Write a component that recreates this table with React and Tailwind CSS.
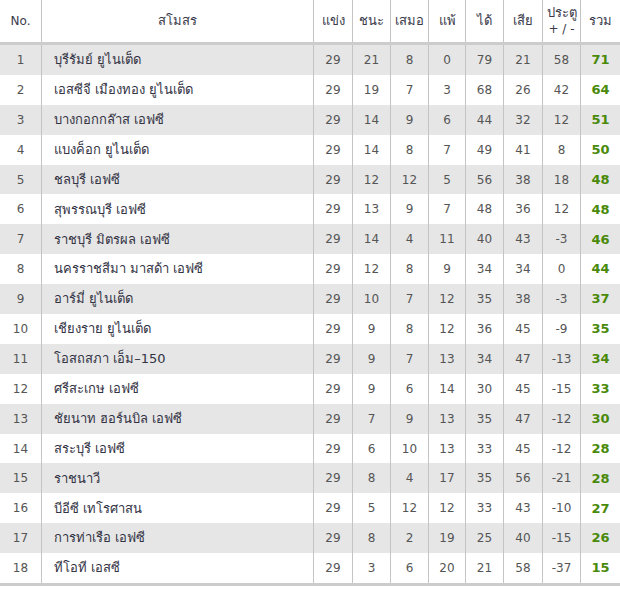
import React from "react";

const rows = [
  [1, "บุรีรัมย์ ยูไนเต็ด", 29, 21, 8, 0, 79, 21, 58, 71],
  [2, "เอสซีจี เมืองทอง ยูไนเต็ด", 29, 19, 7, 3, 68, 26, 42, 64],
  [3, "บางกอกกล๊าส เอฟซี", 29, 14, 9, 6, 44, 32, 12, 51],
  [4, "แบงค็อก ยูไนเต็ด", 29, 14, 8, 7, 49, 41, 8, 50],
  [5, "ชลบุรี เอฟซี", 29, 12, 12, 5, 56, 38, 18, 48],
  [6, "สุพรรณบุรี เอฟซี", 29, 13, 9, 7, 48, 36, 12, 48],
  [7, "ราชบุรี มิตรผล เอฟซี", 29, 14, 4, 11, 40, 43, -3, 46],
  [8, "นครราชสีมา มาสด้า เอฟซี", 29, 12, 8, 9, 34, 34, 0, 44],
  [9, "อาร์มี่ ยูไนเต็ด", 29, 10, 7, 12, 35, 38, -3, 37],
  [10, "เชียงราย ยูไนเต็ด", 29, 9, 8, 12, 36, 45, -9, 35],
  [11, "โอสถสภา เอ็ม–150", 29, 9, 7, 13, 34, 47, -13, 34],
  [12, "ศรีสะเกษ เอฟซี", 29, 9, 6, 14, 30, 45, -15, 33],
  [13, "ชัยนาท ฮอร์นบิล เอฟซี", 29, 7, 9, 13, 35, 47, -12, 30],
  [14, "สระบุรี เอฟซี", 29, 6, 10, 13, 33, 45, -12, 28],
  [15, "ราชนาวี", 29, 8, 4, 17, 35, 56, -21, 28],
  [16, "บีอีซี เทโรศาสน", 29, 5, 12, 12, 33, 43, -10, 27],
  [17, "การท่าเรือ เอฟซี", 29, 8, 2, 19, 25, 40, -15, 26],
  [18, "ทีโอที เอสซี", 29, 3, 6, 20, 21, 58, -37, 15],
];

const statW = ["w-[39px]", "w-[38px]", "w-[38px]", "w-[37px]", "w-[38px]", "w-[39px]", "w-[38px]"];
const heads = ["แข่ง", "ชนะ", "เสมอ", "แพ้", "ได้", "เสีย"];

export default function App() {
  return (
    <div className="w-[620px] h-[589px] bg-white overflow-hidden font-['Tahoma','DejaVu_Sans','Noto_Sans',sans-serif] text-[12px]">
      <div className="flex h-[45px] border-b-[3px] border-[#cccccc] text-[#3a3a4a] text-[13px]">
        <div className="w-[41px] flex items-center justify-center text-[12px]">No.</div>
        <div className="w-[272px] flex items-center justify-center border-l border-[#c4c4c4]">สโมสร</div>
        {heads.map((h, i) => (
          <div key={h} className={`${statW[i]} flex items-center justify-center border-l border-[#c4c4c4]`}>
            {h}
          </div>
        ))}
        <div className="w-[38px] flex flex-col items-center justify-center border-l border-[#c4c4c4] leading-[16px]">
          <span>ประตู</span>
          <span className="text-[12px]">+ / -</span>
        </div>
        <div className="w-[40px] flex items-center justify-center border-l border-[#c4c4c4]">รวม</div>
      </div>
      <div className="flex flex-col border-b-[3px] border-[#cccccc]">
        {rows.map((r) => (
          <div
            key={r[0]}
            className={`flex h-[29.9px] ${r[0] % 2 === 1 ? "bg-[#e6e6e6]" : "bg-white"} text-[#555555]`}
          >
            <div className="w-[41px] flex items-center justify-center">{r[0]}</div>
            <div className="w-[272px] flex items-center pl-[12px] border-l border-[#c4c4c4] text-[#333344] text-[13px] whitespace-nowrap">
              {r[1]}
            </div>
            {r.slice(2, 9).map((v, i) => (
              <div key={i} className={`${statW[i]} flex items-center justify-center border-l border-[#c4c4c4]`}>
                {v}
              </div>
            ))}
            <div className="w-[40px] flex items-center justify-center border-l border-[#c4c4c4] font-bold text-[13px] text-[#4a8a0a]">
              {r[9]}
            </div>
          </div>
        ))}
      </div>
    </div>
  );
}
